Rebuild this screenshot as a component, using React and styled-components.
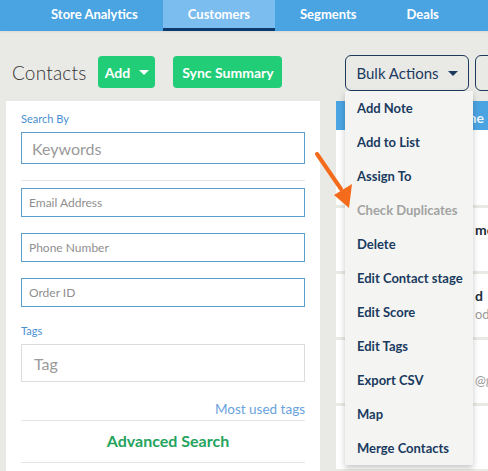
import React from "react";
import styled, { createGlobalStyle } from "styled-components";

const Global = createGlobalStyle`
  html, body { margin: 0; padding: 0; }
  body {
    background: #e9e9e6;
    font-family: Lato, "Open Sans", Arial, sans-serif;
    overflow: hidden;
    width: 488px;
    height: 471px;
  }
  * { box-sizing: border-box; }
`;

const Page = styled.div`
  width: 488px;
  height: 471px;
  display: flex;
  flex-direction: column;
  overflow: hidden;
  position: relative;
`;

const Nav = styled.nav`
  height: 31px;
  background: #4ba4e2;
  display: flex;
  padding-left: 26px;
  flex-shrink: 0;
  box-shadow: 0 1px 2px rgba(0, 0, 0, 0.08);
  white-space: nowrap;
`;

const Tab = styled.div`
  padding: 0 25px 1px;
  display: flex;
  align-items: center;
  flex-shrink: 0;
  color: #fff;
  font-size: 13px;
  font-weight: 700;
  background: ${(p) => (p.$active ? "#7cbdef" : "transparent")};
  border-bottom: 3px solid ${(p) => (p.$active ? "#0b3a6e" : "transparent")};
`;

const Header = styled.div`
  height: 70px;
  display: flex;
  flex-shrink: 0;
  position: relative;
  z-index: 5;
`;

const HeaderLeft = styled.div`
  width: 336px;
  flex-shrink: 0;
  display: flex;
  align-items: center;
  padding: 12px 0 0 12px;
  gap: 18px;
  white-space: nowrap;
`;

const Title = styled.h1`
  margin: 0 -6px 0 0;
  font-size: 19px;
  font-weight: 300;
  color: #333;
  letter-spacing: 0.2px;
`;

const GreenButton = styled.button`
  height: 32px;
  width: ${(p) => p.$w}px;
  padding: 0;
  border: none;
  border-radius: 4px;
  background: #21cd77;
  color: #fff;
  font-family: inherit;
  font-size: 14px;
  font-weight: 700;
  display: flex;
  align-items: center;
  justify-content: center;
  gap: 9px;
  white-space: nowrap;
  flex-shrink: 0;
`;

const Caret = styled.span`
  width: 0;
  height: 0;
  border-left: 5px solid transparent;
  border-right: 5px solid transparent;
  border-top: 5px solid ${(p) => p.$c || "#fff"};
  display: inline-block;
`;

const HeaderRight = styled.div`
  flex: 1;
  display: flex;
  align-items: flex-start;
  padding: 24px 0 0 9px;
  gap: 6px;
  position: relative;
`;

const OutlineButton = styled.button`
  height: 36px;
  width: ${(p) => p.$w || 124}px;
  flex-shrink: 0;
  border: 1px solid #1d3a5b;
  border-radius: 6px;
  background: transparent;
  color: #1b3a5e;
  font-family: inherit;
  font-size: 15px;
  display: flex;
  align-items: center;
  justify-content: center;
  gap: 9px;
  padding: 0;
  white-space: nowrap;
`;

const Menu = styled.ul`
  position: absolute;
  left: 9px;
  top: 60px;
  width: 128px;
  margin: 0;
  padding: 0;
  list-style: none;
  background: #f4f5f2;
  box-shadow: 0 3px 6px rgba(0, 0, 0, 0.22);
`;

const MenuItem = styled.li`
  height: 34px;
  display: flex;
  align-items: center;
  padding-left: 12px;
  font-size: 13px;
  font-weight: 700;
  color: ${(p) => (p.$disabled ? "#a2a2a2" : "#1a3a5f")};
  white-space: nowrap;
`;

const Main = styled.div`
  flex: 1;
  display: flex;
  padding-left: 6px;
  gap: 16px;
  min-height: 0;
`;

const SearchPanel = styled.aside`
  width: 314px;
  flex-shrink: 0;
  background: #fff;
  padding: 11px 15px 0 15px;
  display: flex;
  flex-direction: column;
`;

const Label = styled.div`
  font-size: 11px;
  color: #4b8fd2;
  height: 20px;
  line-height: 14px;
  margin-top: ${(p) => p.$mt || 0}px;
`;

const Input = styled.input`
  width: 100%;
  height: ${(p) => p.$h}px;
  border: 1px solid ${(p) => (p.$grey ? "#dcdcdc" : "#5b9fcb")};
  padding: 0 0 0 ${(p) => p.$pad}px;
  font-family: inherit;
  font-size: ${(p) => p.$fs}px;
  color: #333;
  outline: none;
  background: #fff;
  &::placeholder { color: ${(p) => (p.$fs > 14 ? "#9a9a9a" : "#8f8f8f")}; }
`;

const Rule = styled.hr`
  border: none;
  border-top: 1px solid #e4e4e4;
  margin: ${(p) => p.$m};
`;

const Fields = styled.div`
  display: flex;
  flex-direction: column;
  gap: 16px;
`;

const TagsLink = styled.a`
  align-self: flex-end;
  font-size: 13.5px;
  color: #6aa2dc;
  margin-top: 19px;
  line-height: 17px;
  white-space: nowrap;
`;

const Advanced = styled.div`
  text-align: center;
  color: #25a35d;
  font-weight: 700;
  font-size: 16px;
  line-height: 18px;
  padding: 11px 0 12px 10px;
`;

const ListPanel = styled.section`
  flex: 1;
  display: flex;
  flex-direction: column;
  gap: 3px;
  min-width: 0;
`;

const ListHead = styled.div`
  height: 29px;
  background: #4ba4e2;
  color: #eaf4fc;
  font-size: 14px;
  font-weight: 700;
  display: flex;
  align-items: center;
  padding: 3px 0 0 111px;
  margin-bottom: -3px;
  flex-shrink: 0;
`;

const Row = styled.div`
  height: ${(p) => p.$h || 63}px;
  flex-shrink: 0;
  background: #fff;
  display: flex;
  flex-direction: column;
  padding: 13px 0 0 139px;
  white-space: nowrap;
  gap: 2px;
`;

const Name = styled.div`
  font-size: 14px;
  font-weight: 700;
  color: #1e2d3d;
  line-height: 17px;
  height: 17px;
`;

const Email = styled.div`
  font-size: 13px;
  color: #9a9a9a;
  line-height: 16px;
`;

const Arrow = styled.svg`
  position: absolute;
  left: 310px;
  top: 148px;
  z-index: 10;
`;

const menuItems = [
  "Add Note",
  "Add to List",
  "Assign To",
  "Check Duplicates",
  "Delete",
  "Edit Contact stage",
  "Edit Score",
  "Edit Tags",
  "Export CSV",
  "Map",
  "Merge Contacts",
];

export default function App() {
  return (
    <Page>
      <Global />
      <Nav>
        <Tab>Store Analytics</Tab>
        <Tab $active>Customers</Tab>
        <Tab>Segments</Tab>
        <Tab>Deals</Tab>
        <Tab>Tasks</Tab>
      </Nav>
      <Header>
        <HeaderLeft>
          <Title>Contacts</Title>
          <GreenButton $w={57}>
            Add <Caret />
          </GreenButton>
          <GreenButton $w={109}>Sync Summary</GreenButton>
        </HeaderLeft>
        <HeaderRight>
          <OutlineButton>
            Bulk Actions <Caret $c="#1b3a5e" />
          </OutlineButton>
          <OutlineButton $w={60} />
          <Menu>
            {menuItems.map((m) => (
              <MenuItem key={m} $disabled={m === "Check Duplicates"}>
                {m}
              </MenuItem>
            ))}
          </Menu>
        </HeaderRight>
      </Header>
      <Main>
        <SearchPanel>
          <Label>Search By</Label>
          <Input $h={32} $pad={10} $fs={16} placeholder="Keywords" />
          <Rule $m="16px 0 7px" />
          <Fields>
            <Input $h={29} $pad={7} $fs={12} placeholder="Email Address" />
            <Input $h={29} $pad={7} $fs={12} placeholder="Phone Number" />
            <Input $h={29} $pad={7} $fs={12} placeholder="Order ID" />
          </Fields>
          <Label $mt={17}>Tags</Label>
          <Input $h={38} $grey $pad={12} $fs={16} placeholder="Tag" />
          <TagsLink>Most used tags</TagsLink>
          <Rule $m="2px 0 0" />
          <Advanced>Advanced Search</Advanced>
          <Rule $m="0" />
        </SearchPanel>
        <ListPanel>
          <ListHead>Name</ListHead>
          <Row $h={75} />
          <Row>
            <Name>mons</Name>
          </Row>
          <Row>
            <Name>d</Name>
            <Email>od@gmail.com</Email>
          </Row>
          <Row>
            <Name />
            <Email>@gmail.com</Email>
          </Row>
          <Row />
        </ListPanel>
      </Main>
      <Arrow width="50" height="64" viewBox="0 0 50 64">
        <line x1="7" y1="6" x2="31" y2="41" stroke="#f46b1b" strokeWidth="4" strokeLinecap="round" />
        <polygon points="39,60 24,47 42,36" fill="#f46b1b" />
      </Arrow>
    </Page>
  );
}
